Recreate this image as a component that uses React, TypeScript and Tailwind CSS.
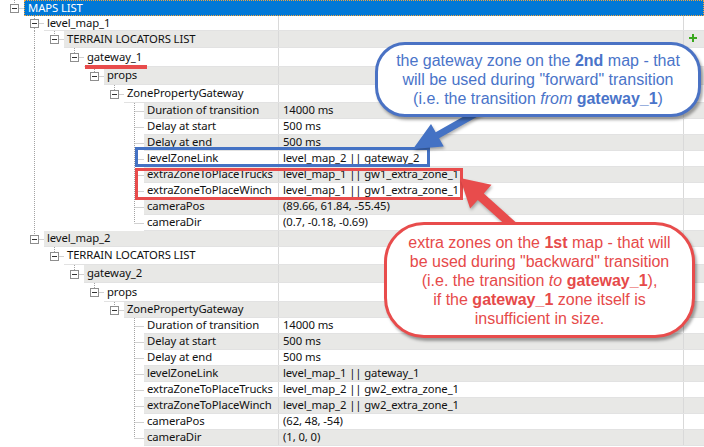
import React from "react";

type Row = {
  level: number;
  label: string;
  value?: string;
  exp: boolean;
  hasNext: boolean;
  pass: number[];
  h: number;
  hc: string;
  sel?: boolean;
  plus?: boolean;
};

const nameW: Record<number, string> = {
  0: "w-[254px]",
  1: "w-[234px]",
  2: "w-[214px]",
  3: "w-[194px]",
  4: "w-[174px]",
  5: "w-[154px]",
  6: "w-[134px]",
};

const hClass: Record<number, string> = {
  15: "h-[15px]",
  16: "h-[16px]",
  17: "h-[17px]",
  18: "h-[18px]",
  19: "h-[19px]",
};

function leaves(vals: string[][], pass: number[]): Row[] {
  return vals.map((v, i) => ({
    level: 6,
    label: v[0],
    value: v[1],
    exp: false,
    hasNext: i < vals.length - 1,
    pass,
    h: 16,
    hc: hClass[16],
  }));
}

const mk = (level: number, label: string, h: number, hasNext: boolean, pass: number[], extra: Partial<Row> = {}): Row => ({
  level,
  label,
  exp: true,
  hasNext,
  pass,
  h,
  hc: hClass[h],
  ...extra,
});

const rows: Row[] = [
  mk(0, "MAPS LIST", 16, false, [], { sel: true }),
  mk(1, "level_map_1", 15, true, []),
  mk(2, "TERRAIN LOCATORS LIST", 17, false, [1], { plus: true }),
  mk(3, "gateway_1", 19, false, [1]),
  mk(4, "props", 18, false, [1]),
  mk(5, "ZonePropertyGateway", 18, false, [1]),
  ...leaves(
    [
      ["Duration of transition", "14000 ms"],
      ["Delay at start", "500 ms"],
      ["Delay at end", "500 ms"],
      ["levelZoneLink", "level_map_2 || gateway_2"],
      ["extraZoneToPlaceTrucks", "level_map_1 || gw1_extra_zone_1"],
      ["extraZoneToPlaceWinch", "level_map_1 || gw1_extra_zone_1"],
      ["cameraPos", "(89.66, 61.84, -55.45)"],
      ["cameraDir", "(0.7, -0.18, -0.69)"],
    ],
    [1]
  ),
  mk(1, "level_map_2", 16, false, []),
  mk(2, "TERRAIN LOCATORS LIST", 18, false, []),
  mk(3, "gateway_2", 18, false, []),
  mk(4, "props", 19, false, []),
  mk(5, "ZonePropertyGateway", 16, false, []),
  ...leaves(
    [
      ["Duration of transition", "14000 ms"],
      ["Delay at start", "500 ms"],
      ["Delay at end", "500 ms"],
      ["levelZoneLink", "level_map_1 || gateway_1"],
      ["extraZoneToPlaceTrucks", "level_map_2 || gw2_extra_zone_1"],
      ["extraZoneToPlaceWinch", "level_map_2 || gw2_extra_zone_1"],
      ["cameraPos", "(62, 48, -54)"],
      ["cameraDir", "(1, 0, 0)"],
    ],
    []
  ),
];

const LINE = "#a3a3a3";

function Lines({ r }: { r: Row }) {
  const w = 24 + 20 * r.level;
  const h = r.h;
  const cx = (l: number) => 14 + 20 * l + 0.5;
  const cy = Math.floor(h / 2) + 0.5;
  const x = cx(r.level);
  return (
    <svg width={w} height={h} className="shrink-0 block">
      {r.pass.map((l) => (
        <line key={l} x1={cx(l)} y1={0} x2={cx(l)} y2={h} stroke={LINE} strokeDasharray="1 1" />
      ))}
      {r.exp ? (
        <>
          <line x1={x} y1={0} x2={x} y2={cy - 4.5} stroke={LINE} strokeDasharray="1 1" />
          {r.hasNext && <line x1={x} y1={cy + 4.5} x2={x} y2={h} stroke={LINE} strokeDasharray="1 1" />}
          <line x1={x + 5} y1={cy} x2={w} y2={cy} stroke={LINE} strokeDasharray="1 1" />
          <rect x={x - 4} y={cy - 4} width={8} height={8} fill="#fff" stroke="#8e8e8e" />
          <line x1={x - 2.5} y1={cy} x2={x + 2.5} y2={cy} stroke="#333" />
        </>
      ) : (
        <>
          <line x1={x} y1={0} x2={x} y2={r.hasNext ? h : cy} stroke={LINE} strokeDasharray="1 1" />
          <line x1={x + 1} y1={cy} x2={w} y2={cy} stroke={LINE} strokeDasharray="1 1" />
        </>
      )}
    </svg>
  );
}

function TreeRow({ r, i }: { r: Row; i: number }) {
  if (r.sel) {
    return (
      <div className={`flex ${r.hc}`}>
        <Lines r={r} />
        <div className="flex flex-1 items-center bg-[#0078d7] text-white pl-[3px] border border-dotted border-[#f2a43a]">
          {r.label}
        </div>
      </div>
    );
  }
  const bg = i % 2 === 0 ? "bg-[#e8e8e6]" : "bg-white";
  return (
    <div className={`flex ${r.hc}`}>
      <Lines r={r} />
      <div className={`flex flex-1 ${bg} border-b border-[#e2e2e2]`}>
        <div className={`flex items-center pl-[3px] shrink-0 whitespace-nowrap overflow-hidden ${nameW[r.level]}`}>{r.label}</div>
        <div className="flex items-center w-[405px] shrink-0 border-l border-[#d9d9d9] pl-[4px] whitespace-nowrap">
          {r.value ?? ""}
        </div>
        <div className="flex flex-1 items-start pt-[3px] pl-[5px] border-l border-[#d9d9d9]">
          {r.plus && (
            <svg width="8" height="8" viewBox="0 0 8 8">
              <rect x="3" y="0" width="2" height="8" fill="#3aa81e" />
              <rect x="0" y="3" width="8" height="2" fill="#3aa81e" />
            </svg>
          )}
        </div>
      </div>
    </div>
  );
}

export default function App() {
  return (
    <div className="relative w-[704px] h-[447px] overflow-hidden bg-white text-[#111] text-[11.3px] tracking-[-0.1px] font-['Noto_Sans',sans-serif]">
      <div className="flex flex-col">
        {rows.map((r, i) => (
          <TreeRow key={i} r={r} i={i} />
        ))}
      </div>

      {/* red underline under gateway_1 */}
      <div className="absolute left-[85px] top-[65px] w-[62px] h-[4px] bg-[#e84c4c]" />

      {/* highlight rectangles */}
      <div className="absolute left-[135px] top-[147px] w-[295px] h-[20px] border-[3px] border-[#4472c4]" />
      <div className="absolute left-[135px] top-[168px] w-[328px] h-[32px] border-[3px] border-[#e84c4c]" />

      {/* arrows */}
      <svg className="absolute left-0 top-0" width="704" height="447" style={{ filter: "drop-shadow(1px 2px 1.5px rgba(0,0,0,0.3))" }}>
        <polygon
          points="480.3,107 435.7,132.2 431,123.9 413,149 443.8,146.5 439.1,138.2 483.7,113"
          fill="#4472c4"
        />
        <polygon
          points="517,235.3 477.8,200 470.1,208.6 460,178 491.5,184.8 483.8,193.4 523,228.7"
          fill="#e84c4c"
        />
      </svg>

      {/* blue callout */}
      <div className="absolute left-[375px] top-[42px] w-[326px] h-[75px] rounded-[30px] border-[3px] border-[#4a72c4] bg-white shadow-[2px_3px_3px_rgba(0,0,0,0.35)] flex flex-col items-center justify-center text-[16px] leading-[19px] tracking-normal text-[#4a74c9] font-['Liberation_Sans',Arial,sans-serif] text-center">
        <div>
          the gateway zone on the <b>2nd</b> map - that
        </div>
        <div>will be used during "forward" transition</div>
        <div>
          (i.e. the transition <i>from</i> <b>gateway_1</b>)
        </div>
      </div>

      {/* red callout */}
      <div className="absolute left-[384px] top-[222px] w-[311px] h-[116px] rounded-[40px] border-[3px] border-[#e84c4c] bg-white shadow-[2px_3px_3px_rgba(0,0,0,0.35)] flex flex-col items-center justify-center text-[16px] leading-[19px] tracking-normal text-[#e64a4a] font-['Liberation_Sans',Arial,sans-serif] text-center">
        <div>
          extra zones on the <b>1st</b> map - that will
        </div>
        <div>be used during "backward" transition</div>
        <div>
          (i.e. the transition <i>to</i> <b>gateway_1</b>),
        </div>
        <div>
          if the <b>gateway_1</b> zone itself is
        </div>
        <div>insufficient in size.</div>
      </div>
    </div>
  );
}
